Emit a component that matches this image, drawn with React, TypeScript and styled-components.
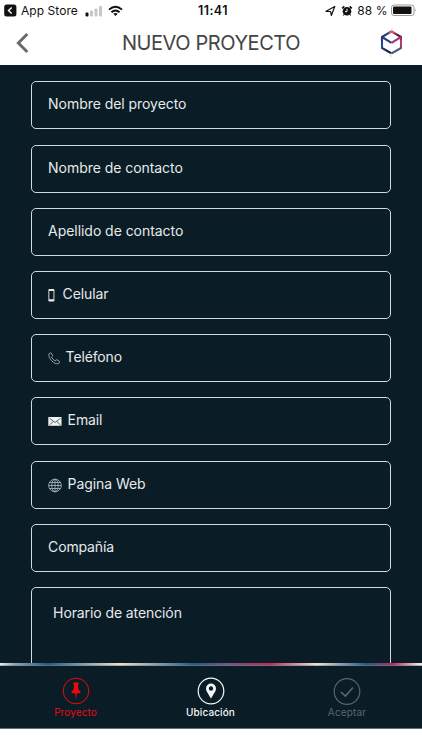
import React from "react";
import styled, { createGlobalStyle } from "styled-components";

const Global = createGlobalStyle`
  * { box-sizing: border-box; }
  body { margin: 0; background: #fff; font-family: Inter, "Liberation Sans", sans-serif; }
`;

const Screen = styled.div`
  width: 422px;
  height: 750px;
  display: flex;
  flex-direction: column;
  overflow: hidden;
  background: #fff;
`;

const StatusBar = styled.div`
  height: 21px;
  flex: none;
  display: grid;
  grid-template-columns: 1fr auto 1fr;
  align-items: center;
  padding: 0 4px;
  color: #111;
`;

const StatusGroup = styled.div<{ $end?: boolean }>`
  display: flex;
  align-items: center;
  justify-content: ${(p) => (p.$end ? "flex-end" : "flex-start")};
`;

const StatusText = styled.span<{ $bold?: boolean; $spacing?: number; $size?: number; $left?: number }>`
  font-size: ${(p) => p.$size ?? 12}px;
  line-height: 16px;
  font-weight: ${(p) => (p.$bold ? 600 : 400)};
  letter-spacing: ${(p) => p.$spacing ?? 0}px;
  margin-left: ${(p) => p.$left ?? 0}px;
  white-space: nowrap;
`;

const StatusIcon = styled.svg<{ $left?: number }>`
  flex: none;
  display: block;
  margin-left: ${(p) => p.$left ?? 0}px;
`;

const Header = styled.header`
  height: 44px;
  flex: none;
  display: grid;
  grid-template-columns: 60px 1fr 60px;
  align-items: center;
`;

const Title = styled.h1`
  margin: 0;
  text-align: center;
  font-size: 20px;
  line-height: 26px;
  font-weight: 400;
  letter-spacing: -0.42px;
  color: #444;
  white-space: nowrap;
`;

const IconButton = styled.button`
  border: 0;
  padding: 0;
  background: none;
  height: 44px;
  display: flex;
  align-items: center;
`;

const Form = styled.main`
  height: 598px;
  flex: none;
  overflow: hidden;
  background: #0a1c25;
  padding: 16.4px 30.6px 0;
  display: flex;
  flex-direction: column;
  gap: 15.2px;
`;

const Field = styled.div<{ $tall?: boolean }>`
  height: ${(p) => (p.$tall ? 120 : 48)}px;
  flex: none;
  border: 1px solid #d3d9dd;
  border-radius: 5px;
  padding: ${(p) => (p.$tall ? "15px 21.5px" : "12px 16.5px")};
  display: flex;
  align-items: flex-start;
`;

const FieldIcon = styled.svg<{ $gap: number }>`
  flex: none;
  display: block;
  margin-top: 4px;
  margin-right: ${(p) => p.$gap}px;
`;

const Label = styled.span<{ $spacing?: number }>`
  font-size: 14px;
  line-height: 20px;
  letter-spacing: ${(p) => p.$spacing ?? -0.05}px;
  color: #e6eaec;
  white-space: nowrap;
`;

const Rule = styled.div`
  height: 3px;
  flex: none;
  background:
    linear-gradient(180deg, transparent 2px, rgba(120, 130, 140, 0.55) 2px),
    linear-gradient(90deg, #e8ecee 0, #8fa9b8 14px, #1f5a86 48px, #7c98a2 80px, #efe2c8 120px, #8fa2a8 155px, #1f5a86 194px, #6a5884 225px, #b52c58 270px, #efe2d4 317px, #1f5a86 366px, #b53060 394px, #f6e6e6 419px);
`;

const Nav = styled.nav`
  height: 63px;
  flex: none;
  background: #0a1c25;
  border-bottom: 1px solid #5f6d75;
  display: grid;
  grid-template-columns: 151px 119px 154px;
  padding-top: 10.5px;
`;

const Tab = styled.button<{ $color: string; $spacing: number; $strong?: boolean }>`
  border: 0;
  padding: 0;
  background: none;
  font-family: inherit;
  display: flex;
  flex-direction: column;
  align-items: center;
  color: ${(p) => p.$color};
  font-size: 10px;
  font-weight: ${(p) => (p.$strong ? 500 : 400)};
  line-height: 14px;
  letter-spacing: ${(p) => p.$spacing}px;
`;

const TabIcon = styled.svg`
  display: block;
  width: 28px;
  height: 28px;
  fill: none;
  stroke: currentColor;
`;

const PhoneIcon = () => (
  <FieldIcon $gap={6.5} width="8" height="15" viewBox="0 0 8 15">
    <rect x="0.4" y="1" width="6" height="12.400" rx="1" fill="#e6eaec" />
    <rect x="1.300" y="3" width="4.200" height="8.200" fill="#0a1c25" />
  </FieldIcon>
);

const HandsetIcon = () => (
  <FieldIcon $gap={5} width="12.5" height="15" viewBox="0 0 12.5 15">
    <path d="M1 2.8 2.3 1.8 3.1 2l1.5 2.4-.1.8-1 .9c.8 1.7 2 2.9 3.7 3.8l.9-1 .8-.1 2.5 1.5.2.8-1 1.4c-2.4.8-4.7-.5-6.8-2.6C1.7 7.800.3 5.100 1 2.800Z" fill="none" stroke="#aab4ba" strokeWidth="0.85" strokeLinejoin="round" />
  </FieldIcon>
);

const EnvelopeIcon = () => (
  <FieldIcon $gap={5.5} width="14" height="15" viewBox="0 0 14 15">
    <rect x="0.300" y="3" width="13.200" height="8.800" fill="#f1f4f5" />
    <path d="m1.500 4.300 5.500 4.200 5.500-4.200M1.500 11l3.800-3.500M12.500 11 8.700 7.500" fill="none" stroke="#35434c" strokeWidth="0.8" />
  </FieldIcon>
);

const GlobeIcon = () => (
  <FieldIcon $gap={5.5} width="14" height="15" viewBox="0 0 14 15">
    <g fill="none" stroke="#a4afb5" strokeWidth="0.9">
      <circle cx="7" cy="7.500" r="6.300" />
      <ellipse cx="7" cy="7.500" rx="3.200" ry="6.300" />
      <path d="M7 1.200v12.600M.7 7.500h12.600M1.600 4.500h10.800M1.600 10.500h10.800" />
    </g>
  </FieldIcon>
);

const fields = [
  { label: "Nombre del proyecto" },
  { label: "Nombre de contacto" },
  { label: "Apellido de contacto" },
  { label: "Celular", icon: <PhoneIcon />, spacing: -0.1 },
  { label: "Teléfono", icon: <HandsetIcon />, spacing: -0.15 },
  { label: "Email", icon: <EnvelopeIcon />, spacing: -0.1 },
  { label: "Pagina Web", icon: <GlobeIcon />, spacing: -0.08 },
  { label: "Compañía", spacing: -0.15 },
  { label: "Horario de atención", tall: true, spacing: -0.1 },
];

export default function App() {
  return (
    <Screen>
      <Global />
      <StatusBar>
        <StatusGroup>
          <StatusIcon width="13" height="13" viewBox="0 0 13 13">
            <rect x="0.200" y="0.500" width="12.200" height="12" rx="2.500" fill="#111" />
            <path d="M7.700 3.600 4.500 6.500l3.200 2.900" fill="none" stroke="#fff" strokeWidth="1.400" />
          </StatusIcon>
          <StatusText $left={4} $spacing={0.05}>App Store</StatusText>
          <StatusIcon $left={7} width="18" height="12" viewBox="0 0 18 12">
            <rect x="0.500" y="7.500" width="3" height="4" rx="1" fill="#111" />
            <rect x="5" y="5.500" width="3" height="6" rx="1" fill="#c6c6c6" />
            <rect x="9.500" y="3.500" width="3" height="8" rx="1" fill="#c6c6c6" />
            <rect x="14" y="1" width="3" height="10.500" rx="1" fill="#c6c6c6" />
          </StatusIcon>
          <StatusIcon $left={5} width="15" height="12" viewBox="0 0 15 12">
            <g fill="none" stroke="#111" strokeWidth="1.900">
              <path d="M1 4.600Q7.500-1.300 14 4.600" />
              <path d="M3.400 7.200Q7.500 3.600 11.600 7.200" />
            </g>
            <path d="M5.300 8.800Q7.500 7 9.700 8.800L7.500 11Z" fill="#111" />
          </StatusIcon>
        </StatusGroup>
        <StatusText $bold $size={12.5} $left={4} $spacing={0.4}>11:41</StatusText>
        <StatusGroup $end>
          <StatusIcon width="11" height="12" viewBox="0 0 11 12">
            <path d="M1 6.300 9.800 1.500 6.300 10.500 5.600 6.500Z" fill="none" stroke="#111" strokeWidth="1.200" strokeLinejoin="round" />
          </StatusIcon>
          <StatusIcon $left={5} width="12" height="12" viewBox="0 0 12 12">
            <circle cx="6" cy="6.300" r="4.300" fill="#111" />
            <path d="M1.200 3.300 3.300 1.400M8.700 1.400l2.100 1.900" stroke="#111" strokeWidth="1.700" />
            <path d="m3 9.500-.7 1M9 9.500l.7 1" stroke="#111" strokeWidth="1.200" />
            <path d="M6 3.800v2.900H4" fill="none" stroke="#fff" />
          </StatusIcon>
          <StatusText $left={4.5} $spacing={0.05}>88 %</StatusText>
          <StatusIcon $left={3.5} width="27" height="13" viewBox="0 0 27 13">
            <rect x="0.500" y="1" width="22.500" height="10.500" rx="2.500" fill="#fff" stroke="#999" />
            <rect x="2" y="2.500" width="18.500" height="7.500" rx="1" fill="#111" />
            <path d="M24.300 4.500q1.500 1.700 0 3.500Z" fill="#999" />
          </StatusIcon>
        </StatusGroup>
      </StatusBar>
      <Header>
        <IconButton aria-label="Atrás">
          <StatusIcon $left={16} width="14" height="22" viewBox="0 0 14 22">
            <path d="M11.300 2 2.400 11l8.900 9" fill="none" stroke="#696a6d" strokeWidth="3" />
          </StatusIcon>
        </IconButton>
        <Title>NUEVO PROYECTO</Title>
        <StatusIcon $left={15.5} width="24" height="30" viewBox="0 0 24 30">
          <defs>
            <linearGradient id="mark" x1="0" y1="0" x2="0.6" y2="1">
              <stop offset="0" stopColor="#1b2148" />
              <stop offset="0.450" stopColor="#2c4c98" />
              <stop offset="1" stopColor="#15172e" />
            </linearGradient>
            <linearGradient id="edge" x1="0" y1="0" x2="0" y2="1">
              <stop offset="0" stopColor="#d9446a" />
              <stop offset="0.200" stopColor="#2a2048" />
              <stop offset="0.450" stopColor="#d73561" />
              <stop offset="1" stopColor="#265a91" />
            </linearGradient>
          </defs>
          <g fill="none" strokeWidth="2.100" strokeLinejoin="round">
            <path d="M13.500 3.400 4 9v11l9.500 5.300" stroke="url(#mark)" />
            <path d="M13.500 3.400 23 9v11l-9.500 5.300" stroke="url(#edge)" />
            <path d="m4 9 9.500 5.800" stroke="#2c3f86" />
            <path d="M13.500 14.800 23 9" stroke="#a83579" />
            <path d="m11 4.900 2.500-1.500 2.500 1.500" stroke="#db526a" />
            <path d="M14 .5v2.500M12.800 25.500v3.500" stroke="#d9d2c9" strokeWidth="1" />
          </g>
        </StatusIcon>
      </Header>
      <Form>
        {fields.map((f) => (
          <Field key={f.label} $tall={f.tall}>
            {f.icon}
            <Label $spacing={f.spacing}>{f.label}</Label>
          </Field>
        ))}
      </Form>
      <Rule />
      <Nav>
        <Tab $color="#e90b10" $spacing={0.1}>
          <TabIcon viewBox="0 0 28 28">
            <circle cx="14" cy="14" r="12.800" />
            <path d="M11.300 5.600h5.400v1.600l-.8.500.6 5.100 1.900 1.700v1.800h-3.600L14 23.500l-.8-7.200H9.600v-1.800l1.900-1.700.6-5.100-.8-.5Z" fill="currentColor" stroke="none" />
          </TabIcon>
          Proyecto
        </Tab>
        <Tab $color="#f3f5f6" $spacing={0.1} $strong>
          <TabIcon viewBox="0 0 28 28">
            <circle cx="14" cy="14" r="12.800" strokeWidth="1.200" />
            <path d="M14 6.500a5 5 0 0 0-5 5c0 3.200 3.100 6.300 5 10.300 1.900-4 5-7.100 5-10.300a5 5 0 0 0-5-5Zm0 2.800a2.200 2.200 0 1 1 0 4.400 2.200 2.200 0 0 1 0-4.400Z" fill="currentColor" stroke="none" fillRule="evenodd" />
          </TabIcon>
          Ubicación
        </Tab>
        <Tab $color="#59666e" $spacing={0.15}>
          <TabIcon viewBox="0 0 28 28">
            <circle cx="14" cy="14.500" r="12.800" strokeWidth="1.200" />
            <path d="m8 15 4.300 4L20 10.500" strokeWidth="1.700" />
          </TabIcon>
          Aceptar
        </Tab>
      </Nav>
    </Screen>
  );
}
